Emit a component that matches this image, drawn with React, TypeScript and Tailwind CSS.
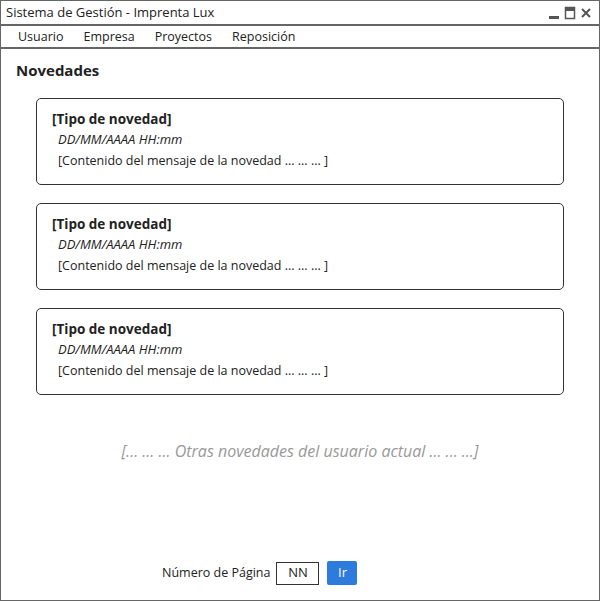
import React from "react";

const novedades = [1, 2, 3];

const NovedadCard: React.FC = () => {
  return (
    <div className="mx-[35px] h-[87px] rounded-[5px] border border-[#333] px-[15px] pt-[10px]">
      <div className="text-[13.5px] leading-[20px] font-bold text-[#222]">[Tipo de novedad]</div>
      <div className="pl-[6px] text-[13px] leading-[21px] italic text-[#222]">DD/MM/AAAA HH:mm</div>
      <div className="pl-[6px] text-[12.5px] leading-[21px] text-[#222]">
        [Contenido del mensaje de la novedad ... ... ... ]
      </div>
    </div>
  );
};

export default function App() {
  return (
    <div
      className="w-[600px] h-[601px] bg-white border border-[#666] flex flex-col text-[#222]"
      style={{ fontFamily: '"Open Sans", "Liberation Sans", sans-serif' }}
    >
      {/* TITLE BAR */}
      <div className="h-[25px] border-b-2 border-[#666] flex items-center justify-between pl-[5px] pr-[7px]">
        <span className="text-[13px] leading-none">Sistema de Gestión - Imprenta Lux</span>
        <div className="flex items-center gap-[4px] text-[#555]">
          <svg width="12" height="14" viewBox="0 0 12 14">
            <rect x="1" y="10" width="10" height="3" fill="#555" />
          </svg>
          <svg width="12" height="14" viewBox="0 0 12 14">
            <rect x="1.5" y="1.5" width="9" height="11" fill="none" stroke="#555" strokeWidth="1.5" />
            <rect x="1" y="1" width="10" height="4" fill="#555" />
          </svg>
          <svg width="12" height="14" viewBox="0 0 12 14">
            <path d="M2 3 L10 11 M10 3 L2 11" stroke="#555" strokeWidth="2" />
          </svg>
        </div>
      </div>
      {/* MENU */}
      <div className="h-[23px] border-b-2 border-[#666] flex items-center gap-[20px] pl-[17px] pt-[1px]">
        <span className="text-[12.5px]">Usuario</span>
        <span className="text-[12.5px]">Empresa</span>
        <span className="text-[12.5px]">Proyectos</span>
        <span className="text-[12.5px]">Reposición</span>
      </div>
      <div className="flex-1 flex flex-col">
        <div className="pl-[15px] pt-[10px] text-[15px] font-bold leading-[22px]">Novedades</div>
        <div className="mt-[17px] flex flex-col gap-[18px]">
          {novedades.map((n) => (
            <NovedadCard key={n} />
          ))}
        </div>
        <div className="mt-[44px] text-center text-[16px] italic text-[#999]">
          [... ... ... Otras novedades del usuario actual ... ... ...]
        </div>
        <div className="mt-auto mb-[15px] flex items-center pl-[161px]">
          <span className="text-[12.5px]">Número de Página</span>
          <div className="ml-[6px] w-[43px] h-[23px] border border-[#333] flex items-center justify-center text-[13px]">
            NN
          </div>
          <div className="ml-[8px] w-[30px] h-[24px] rounded-[2px] bg-[#2e7bde] text-white flex items-center justify-center text-[13px]">
            Ir
          </div>
        </div>
      </div>
    </div>
  );
}
